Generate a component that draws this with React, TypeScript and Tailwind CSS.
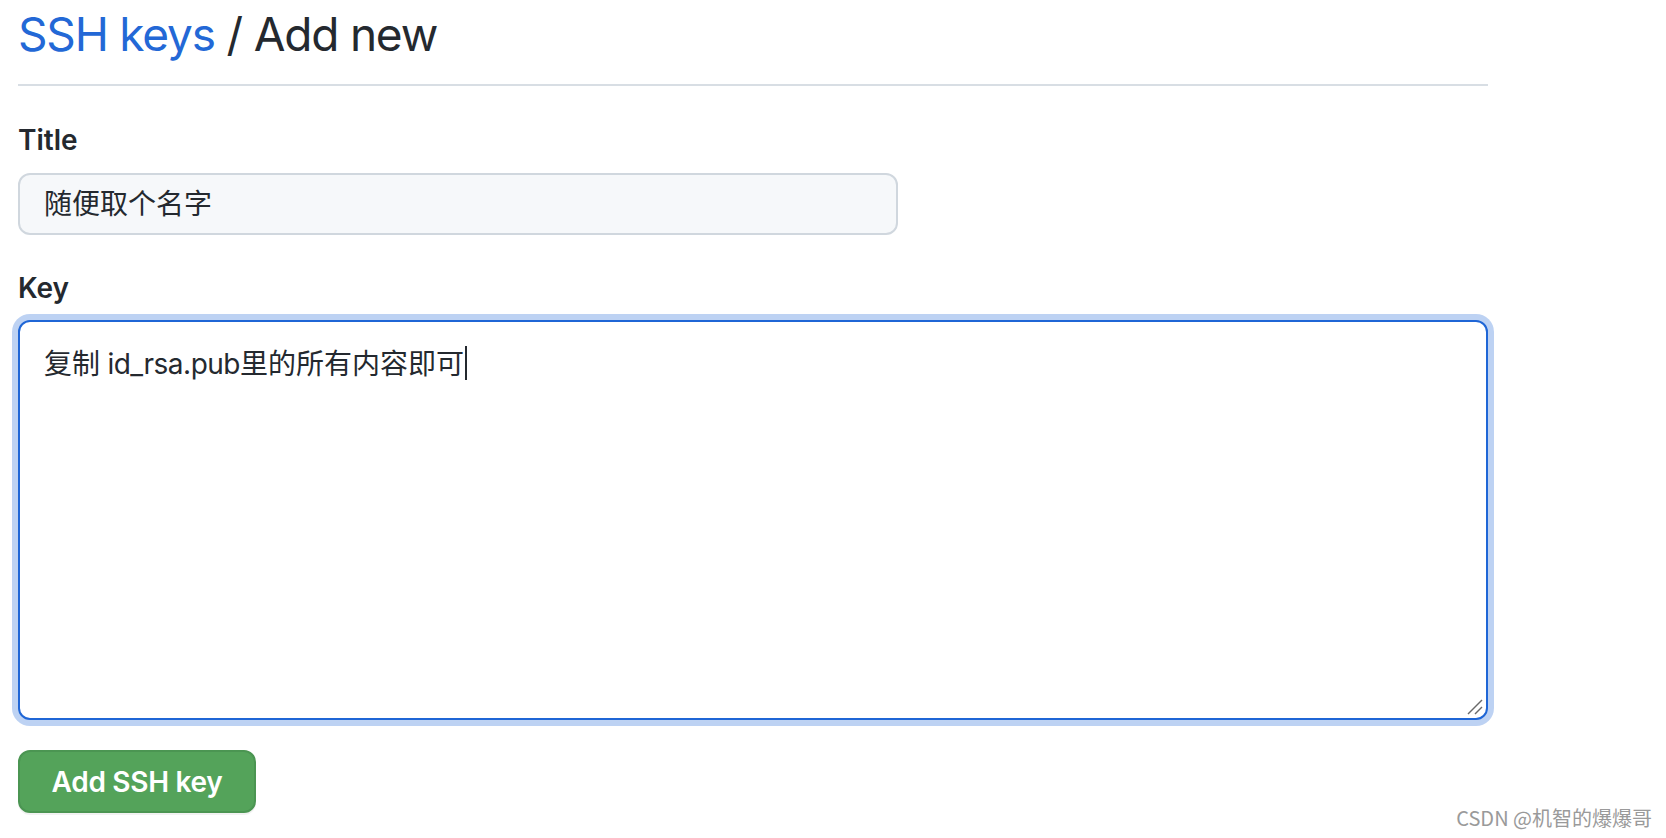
import React from 'react';

const font = { fontFamily: 'Inter, "Noto Sans CJK SC", sans-serif' };

const App: React.FC = () => {
  return (
    <div className="relative min-h-[838px] w-[1666px] bg-white text-[#24292f]" style={font}>
      <div className="ml-[18px] w-[1470px] pt-[4px]">
        <h1 className="text-[46px] leading-[60px] font-normal tracking-[-1.2px]">
          <span className="text-[#2368d6]">SSH keys</span>
          <span> / Add new</span>
        </h1>
        <div className="mt-[20px] h-[2px] bg-[#d8dee4]" />

        <form className="flex flex-col" onSubmit={(e) => e.preventDefault()}>
          <label className="mt-[34px] text-[28px] leading-[40px] font-semibold">Title</label>
          <div className="mt-[13px] flex h-[62px] w-[880px] items-center rounded-[12px] border-2 border-[#d0d7de] bg-[#f6f8fa] pl-[24px] text-[28px] leading-[40px]">
            随便取个名字
          </div>

          <label className="mt-[33px] text-[28px] leading-[40px] font-semibold">Key</label>
          <div className="relative mt-[12px] h-[400px] w-[1470px] rounded-[12px] border-2 border-[#1f66d6] bg-white pl-[24px] pt-[18px] text-[28px] leading-[40px] shadow-[0_0_0_6px_#bdd2f3]">
            <span>
              复制<span className="tracking-[-0.5px]"> id_rsa.pub</span>里的所有内容即可
            </span>
            <span className="ml-[1px] inline-block h-[34px] w-[2px] translate-y-[6px] bg-[#24292f] align-baseline" />
            <svg className="absolute bottom-[3px] right-[3px]" width="16" height="16" viewBox="0 0 16 16">
              <line x1="1" y1="15" x2="15" y2="1" stroke="#6a6a6a" strokeWidth="1.4" />
              <line x1="8" y1="15" x2="15" y2="8" stroke="#6a6a6a" strokeWidth="1.4" />
            </svg>
          </div>

          <div className="mt-[30px]">
            <button
              type="submit"
              className="h-[63px] w-[238px] rounded-[12px] border-2 border-[#4b9552] bg-[#54a35a] text-[28px] font-semibold tracking-[-0.3px] text-white shadow-[0_2px_0_rgba(27,31,36,0.06)]"
            >
              Add SSH key
            </button>
          </div>
        </form>
      </div>

      <div
        className="absolute bottom-[6px] right-[14px] text-[20px] leading-[28px] text-[#9a9a9a]"
        style={{ fontFamily: '"Noto Sans CJK SC", "Noto Sans", sans-serif', textShadow: '0 0 2px #fff, 0 0 2px #fff' }}
      >
        CSDN @机智的爆爆哥
      </div>
    </div>
  );
};

export default App;
